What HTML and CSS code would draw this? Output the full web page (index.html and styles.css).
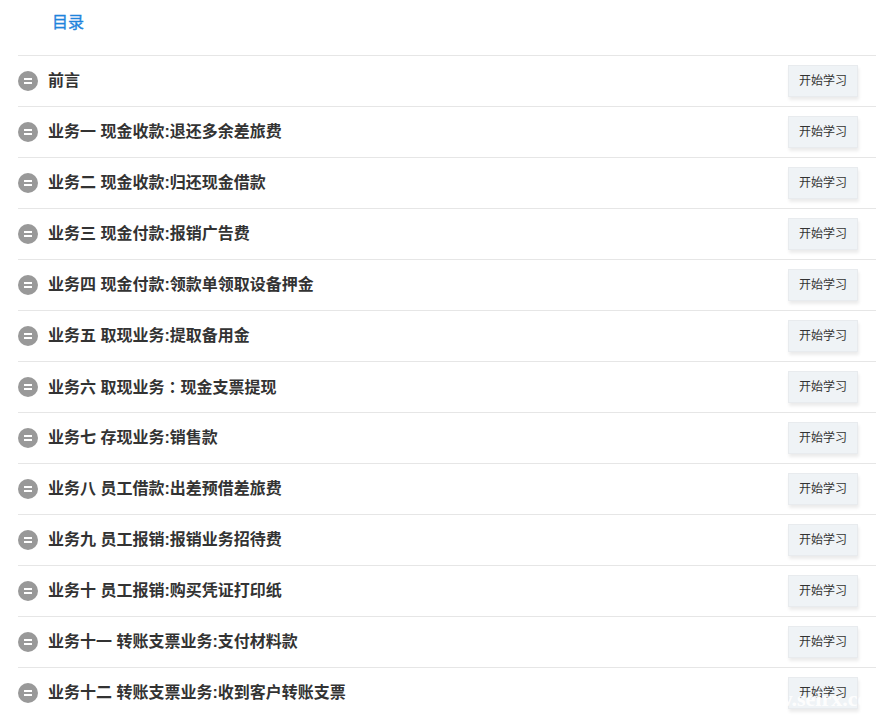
FILE: index.html
```html
<!DOCTYPE html>
<html lang="zh-CN">
<head>
<meta charset="utf-8">
<title>目录</title>
<link rel="stylesheet" href="styles.css">
</head>
<body>
<main class="catalog">
  <h2 class="catalog-title">目录</h2>
  <ul class="lesson-list">
    <li class="lesson"><span class="dot"></span><span class="lesson-name">前言</span><button class="start">开始学习</button></li>
    <li class="lesson"><span class="dot"></span><span class="lesson-name">业务一 现金收款:退还多余差旅费</span><button class="start">开始学习</button></li>
    <li class="lesson"><span class="dot"></span><span class="lesson-name">业务二 现金收款:归还现金借款</span><button class="start">开始学习</button></li>
    <li class="lesson"><span class="dot"></span><span class="lesson-name">业务三 现金付款:报销广告费</span><button class="start">开始学习</button></li>
    <li class="lesson"><span class="dot"></span><span class="lesson-name">业务四 现金付款:领款单领取设备押金</span><button class="start">开始学习</button></li>
    <li class="lesson"><span class="dot"></span><span class="lesson-name">业务五 取现业务:提取备用金</span><button class="start">开始学习</button></li>
    <li class="lesson"><span class="dot"></span><span class="lesson-name">业务六 取现业务<span class="wide-colon" lang="zh-TW">：</span>现金支票提现</span><button class="start">开始学习</button></li>
    <li class="lesson"><span class="dot"></span><span class="lesson-name">业务七 存现业务:销售款</span><button class="start">开始学习</button></li>
    <li class="lesson"><span class="dot"></span><span class="lesson-name">业务八 员工借款:出差预借差旅费</span><button class="start">开始学习</button></li>
    <li class="lesson"><span class="dot"></span><span class="lesson-name">业务九 员工报销:报销业务招待费</span><button class="start">开始学习</button></li>
    <li class="lesson"><span class="dot"></span><span class="lesson-name">业务十 员工报销:购买凭证打印纸</span><button class="start">开始学习</button></li>
    <li class="lesson"><span class="dot"></span><span class="lesson-name">业务十一 转账支票业务:支付材料款</span><button class="start">开始学习</button></li>
    <li class="lesson"><span class="dot"></span><span class="lesson-name">业务十二 转账支票业务:收到客户转账支票</span><button class="start">开始学习</button></li>
  </ul>
</main>
<div class="watermark">www.seirx.com</div>
</body>
</html>
```
FILE: styles.css
```css
html, body {
  margin: 0;
  padding: 0;
  height: 718px;
  overflow: hidden;
  background: #fff;
  font-family: "Liberation Sans", "Noto Sans CJK SC", sans-serif;
}
.catalog {
  padding: 0 20px 0 18px;
}
.catalog-title {
  margin: 0;
  height: 55px;
  padding: 12px 0 0 34px;
  box-sizing: border-box;
  font-size: 16px;
  line-height: 22px;
  font-weight: 400;
  color: #1f84dc;
  -webkit-text-stroke: 0.35px #1f84dc;
}
.lesson-list {
  margin: 0;
  padding: 0;
  list-style: none;
}
.lesson {
  display: flex;
  align-items: center;
  height: 51px;
  box-sizing: border-box;
  border-top: 1px solid #e6e6e6;
  padding-right: 18px;
}
.dot {
  position: relative;
  flex: none;
  width: 20px;
  height: 20px;
  border-radius: 50%;
  background: #999;
  margin-right: 10px;
}
.dot::before {
  content: "";
  position: absolute;
  left: 6px;
  top: 7px;
  width: 8px;
  height: 6px;
  box-sizing: border-box;
  border-top: 2px solid #fff;
  border-bottom: 2px solid #fff;
}
.lesson-name {
  flex: 1;
  font-size: 16px;
  font-weight: 700;
  color: #333;
  line-height: 22px;
}
.wide-colon {
  font-family: "Noto Sans CJK TC", sans-serif;
}
.start {
  flex: none;
  width: 70px;
  height: 32px;
  padding: 0 0 3px;
  border: 1px solid #e8ebee;
  background: #eff3f6;
  box-shadow: 1px 3px 3px rgba(0, 0, 0, 0.08);
  font-family: inherit;
  font-size: 12px;
  color: #333;
}
.watermark {
  position: absolute;
  left: 745px;
  top: 686px;
  white-space: nowrap;
  font-family: "Liberation Serif", serif;
  font-size: 22px;
  font-weight: 700;
  color: rgba(255, 255, 255, 0.9);
}
```
